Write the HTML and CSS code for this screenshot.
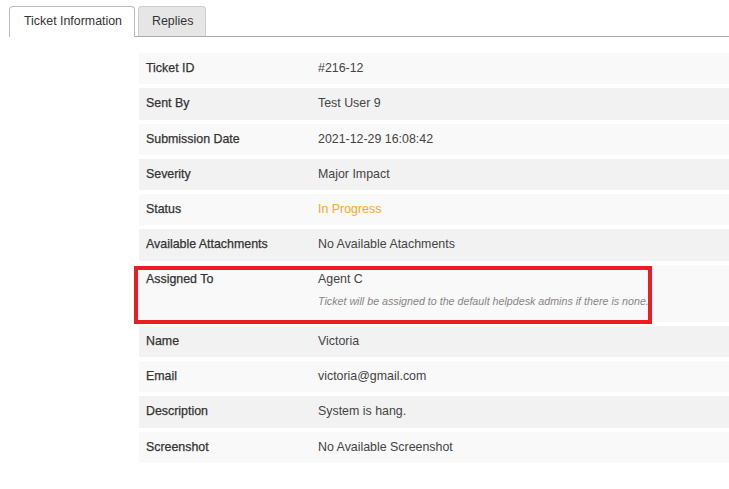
FILE: index.html
```html
<!DOCTYPE html>
<html lang="en">
<head>
    <meta charset="UTF-8">
    <meta name="viewport" content="width=device-width, initial-scale=1.0">
    <title>Ticket Details</title>
    <link rel="stylesheet" href="styles.css">
</head>
<body>
    <ul class="tabs">
        <li class="tab active">Ticket Information</li>
        <li class="tab">Replies</li>
    </ul>

    <div class="details">
        <div class="row"><div class="label">Ticket ID</div><div class="value">#216-12</div></div>
        <div class="row"><div class="label">Sent By</div><div class="value">Test User 9</div></div>
        <div class="row"><div class="label">Submission Date</div><div class="value">2021-12-29 16:08:42</div></div>
        <div class="row"><div class="label">Severity</div><div class="value">Major Impact</div></div>
        <div class="row"><div class="label">Status</div><div class="value status">In Progress</div></div>
        <div class="row"><div class="label">Available Attachments</div><div class="value">No Available Atachments</div></div>
        <div class="row tall">
            <div class="label">Assigned To</div>
            <div class="value">
                Agent C
                <div class="note">Ticket will be assigned to the default helpdesk admins if there is none.</div>
            </div>
        </div>
        <div class="row"><div class="label">Name</div><div class="value">Victoria</div></div>
        <div class="row"><div class="label">Email</div><div class="value">victoria@gmail.com</div></div>
        <div class="row"><div class="label">Description</div><div class="value">System is hang.</div></div>
        <div class="row"><div class="label">Screenshot</div><div class="value">No Available Screenshot</div></div>

        <!-- annotation box -->
        <div class="highlight"></div>
    </div>
</body>
</html>
```

FILE: styles.css
```css
body {
    margin: 0;
    background: #fff;
    font-family: "Liberation Sans", Arial, sans-serif;
    font-size: 12.4px;
    color: #444;
}
.tabs {
    list-style: none;
    margin: 6px 0 0 9px;
    padding: 0;
    display: flex;
    gap: 3px;
    border-bottom: 1px solid #aaa;
    height: 30px;
}
.tab {
    height: 30px;
    box-sizing: border-box;
    padding: 0 12px 0 13px;
    line-height: 29px;
    border: 1px solid #ccc;
    border-bottom: none;
    border-radius: 4px 4px 0 0;
    background: #e6e6e6;
    color: #333;
}
.tab.active {
    background: #fff;
    height: 31px;
    padding: 0 12px 0 14px;
    border-color: #bbb;
}
.details {
    position: relative;
    margin: 16px 0 0 139px;
    display: flex;
    flex-direction: column;
    gap: 4px;
}
.row {
    display: flex;
    align-items: flex-start;
    min-height: 31.3px;
    background: #f9f9f9;
}
.row:nth-child(even) {
    background: #f2f2f2;
}
.label {
    width: 179px;
    flex-shrink: 0;
    padding: 8px 0 0 7px;
    box-sizing: border-box;
    color: #333;
    -webkit-text-stroke: 0.25px #333;
}
.value {
    padding-top: 8px;
}
.tall .label,
.tall .value {
    padding-top: 7px;
}
.status {
    color: #f9a825;
}
.tall {
    min-height: 57px;
}
.note {
    font-size: 10.7px;
    font-style: italic;
    color: #8a8484;
    margin-top: 9px;
}
.highlight {
    position: absolute;
    left: -5px;
    top: 213px;
    width: 510px;
    height: 50px;
    border: 4px solid #ed1c24;
}
```
